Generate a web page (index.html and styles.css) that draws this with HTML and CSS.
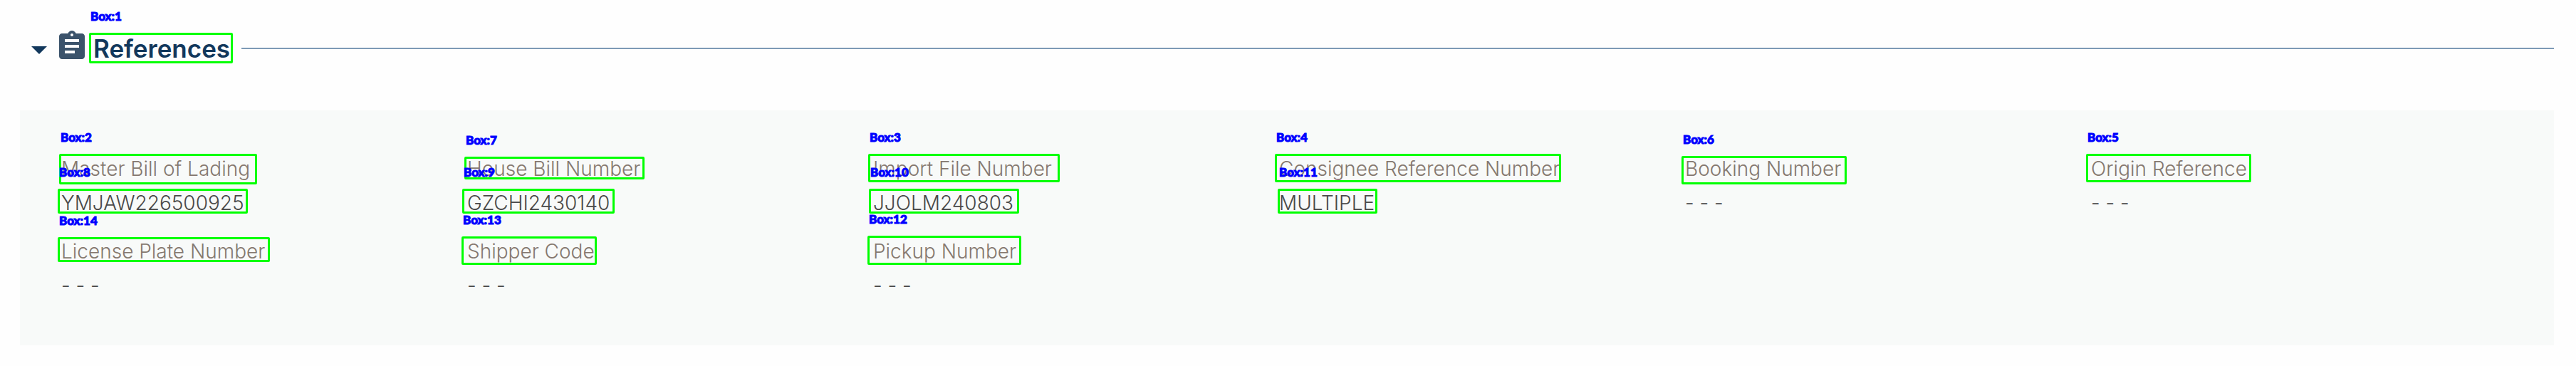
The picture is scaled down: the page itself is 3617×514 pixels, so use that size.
FILE: index.html
```
<!DOCTYPE html>
<html lang="en">
<head>
<meta charset="utf-8">
<title>References</title>
<link rel="stylesheet" href="styles.css">
</head>
<body>
<section class="section">
  <header class="section-header">
    <button class="toggle" type="button" aria-label="Collapse References" aria-expanded="true">
      <svg class="caret" viewBox="0 0 22 11" aria-hidden="true"><path d="M0 0h22L11 11z"/></svg>
    </button>
    <svg class="section-icon" viewBox="0 0 24 24" aria-hidden="true"><path d="M19 3h-4.18C14.4 1.84 13.3 1 12 1s-2.4.84-2.82 2H5c-1.1 0-2 .9-2 2v14c0 1.1.9 2 2 2h14c1.1 0 2-.9 2-2V5c0-1.1-.9-2-2-2zm-7 0c.55 0 1 .45 1 1s-.45 1-1 1-1-.45-1-1 .45-1 1-1zm2 14H7v-2h7v2zm3-4H7v-2h10v2zm0-4H7V7h10v2z"/></svg>
    <h2 class="section-title">References<span class="box" style="--x:0px;--y:5px;--w:202px;--h:43px"><span class="tag">Box:1</span></span></h2>
    <span class="rule"></span>
  </header>
  <dl class="panel">
    <div class="field">
      <dt class="label">Master Bill of Lading<span class="box" style="--x:-3px;--y:3px;--w:278px;--h:43px"><span class="tag">Box:2</span></span></dt>
      <dd class="value">YMJAW226500925<span class="box" style="--x:-5px;--y:4px;--w:267px;--h:35px"><span class="tag">Box:8</span></span></dd>
    </div>
    <div class="field">
      <dt class="label">House Bill Number<span class="box" style="--x:-4px;--y:7px;--w:253px;--h:32px"><span class="tag">Box:7</span></span></dt>
      <dd class="value">GZCHI2430140<span class="box" style="--x:-7px;--y:4px;--w:214px;--h:35px"><span class="tag">Box:9</span></span></dd>
    </div>
    <div class="field">
      <dt class="label">Import File Number<span class="box" style="--x:-7px;--y:3px;--w:269px;--h:40px"><span class="tag">Box:3</span></span></dt>
      <dd class="value">JJOLM240803<span class="box" style="--x:-6px;--y:4px;--w:211px;--h:35px"><span class="tag">Box:10</span></span></dd>
    </div>
    <div class="field">
      <dt class="label">Consignee Reference Number<span class="box" style="--x:-6px;--y:3px;--w:402px;--h:40px"><span class="tag">Box:4</span></span></dt>
      <dd class="value">MULTIPLE<span class="box" style="--x:-2px;--y:4px;--w:140px;--h:35px"><span class="tag">Box:11</span></span></dd>
    </div>
    <div class="field">
      <dt class="label">Booking Number<span class="box" style="--x:-5px;--y:6px;--w:232px;--h:40px"><span class="tag">Box:6</span></span></dt>
      <dd class="value">- - -</dd>
    </div>
    <div class="field">
      <dt class="label">Origin Reference<span class="box" style="--x:-7px;--y:3px;--w:232px;--h:40px"><span class="tag">Box:5</span></span></dt>
      <dd class="value">- - -</dd>
    </div>
    <div class="field">
      <dt class="label">License Plate Number<span class="box" style="--x:-5px;--y:4px;--w:298px;--h:35px"><span class="tag">Box:14</span></span></dt>
      <dd class="value">- - -</dd>
    </div>
    <div class="field">
      <dt class="label">Shipper Code<span class="box" style="--x:-8px;--y:3px;--w:190px;--h:40px"><span class="tag">Box:13</span></span></dt>
      <dd class="value">- - -</dd>
    </div>
    <div class="field">
      <dt class="label">Pickup Number<span class="box" style="--x:-8px;--y:2px;--w:216px;--h:41px"><span class="tag">Box:12</span></span></dt>
      <dd class="value">- - -</dd>
    </div>
  </dl>
</section>
</body>
</html>
```
FILE: styles.css
```
* { box-sizing: border-box; }
body {
  margin: 0;
  background: #fefefe;
  font-family: Inter, "Liberation Sans", sans-serif;
  font-size: 28px;
  font-weight: 300;
  line-height: 48px;
}
.section { padding: 41px 31px 29px 28px; }
.section-header {
  display: flex;
  align-items: flex-start;
  padding: 0 0 63px 16px;
}
.toggle {
  display: flex;
  align-items: center;
  height: 48px;
  margin: 0;
  padding: 11px 11px 0 0;
  border: 0;
  background: none;
  cursor: pointer;
}
.caret { width: 22px; height: 11px; fill: #12385c; }
.section-icon { width: 48px; height: 48px; fill: #3b536b; }
.section-title {
  position: relative;
  margin: 0;
  padding: 3px 0 0 6px;
  color: #12385c;
  font-size: 35px;
  font-weight: 600;
  line-height: 48px;
}
.rule { flex: 1; height: 2px; margin: 26px 0 0 16px; background: #7d9ab6; }
.panel {
  display: grid;
  grid-template-columns: repeat(6, 1fr);
  row-gap: 20px;
  margin: 0;
  padding: 58px 80px 60px 58px;
  background: #f8faf9;
}
.label, .value { position: relative; margin: 0; white-space: nowrap; }
.label { color: #85786f; }
.value { color: #4a4a4a; }
.box {
  position: absolute;
  left: var(--x);
  top: var(--y);
  width: var(--w);
  height: var(--h);
  border: 3px solid #00ff00;
  border-radius: 2px;
}
.tag {
  position: absolute;
  left: -1px;
  top: -36px;
  color: #0000ff;
  font-family: Lato, sans-serif;
  font-size: 17px;
  font-weight: 900;
  line-height: 20px;
  -webkit-text-stroke: 1px #0000ff;
}
```
